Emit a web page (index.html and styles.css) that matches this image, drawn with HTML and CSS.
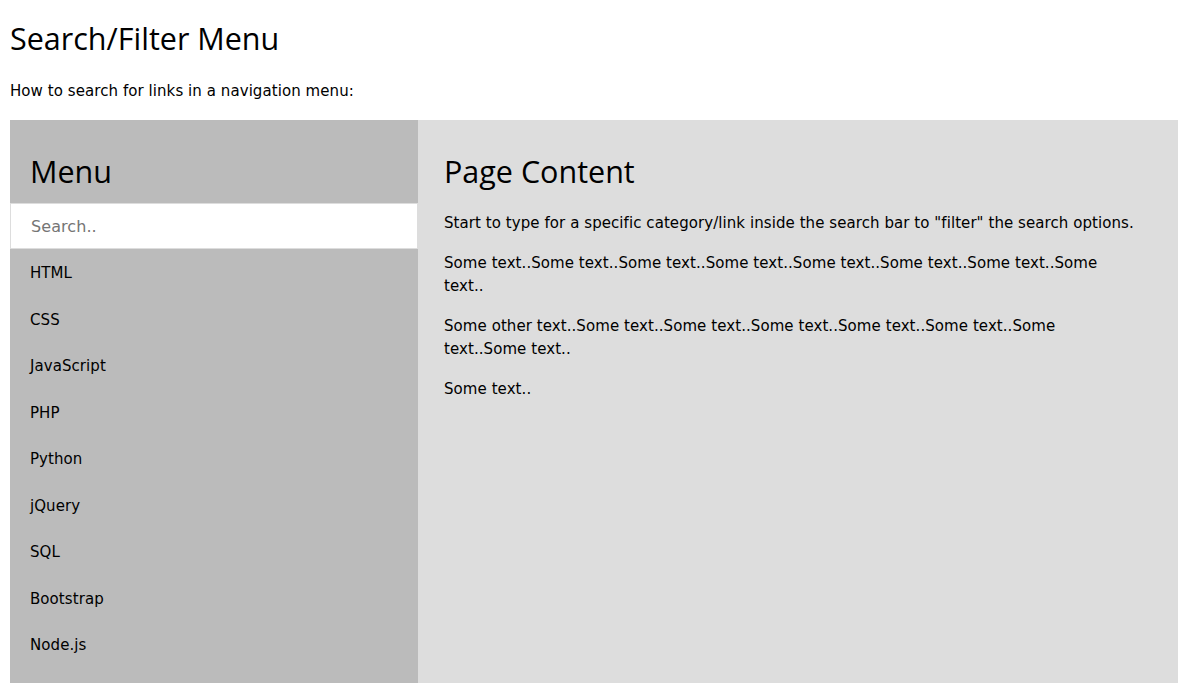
FILE: index.html
```html
<!DOCTYPE html>
<html>
<head>
<meta charset="utf-8">
<link rel="stylesheet" href="styles.css">
</head>
<body>
<h2 class="title">Search/Filter Menu</h2>
<p class="intro">How to search for links in a navigation menu:</p>
<div class="row">
  <div class="left">
    <h2 class="panel-title">Menu</h2>
    <input class="search" type="text" placeholder="Search..">
    <ul class="menu">
      <li><a href="#">HTML</a></li>
      <li><a href="#">CSS</a></li>
      <li><a href="#">JavaScript</a></li>
      <li><a href="#">PHP</a></li>
      <li><a href="#">Python</a></li>
      <li><a href="#">jQuery</a></li>
      <li><a href="#">SQL</a></li>
      <li><a href="#">Bootstrap</a></li>
      <li><a href="#">Node.js</a></li>
    </ul>
  </div>
  <div class="right">
    <h2 class="panel-title content-title">Page Content</h2>
    <p>Start to type for a specific category/link inside the search bar to "filter" the search options.</p>
    <p>Some text..Some text..Some text..Some text..Some text..Some text..Some text..Some text..</p>
    <p>Some other text..Some text..Some text..Some text..Some text..Some text..Some text..Some text..</p>
    <p>Some text..</p>
  </div>
</div>
</body>
</html>
```
FILE: styles.css
```css
* { box-sizing: border-box; }
body {
  margin: 0 8px 0 10px;
  font-family: "DejaVu Sans", Verdana, sans-serif;
  font-size: 15px;
  letter-spacing: 0.07px;
  color: #000;
  background: #fff;
}
.title {
  font-family: "Open Sans", "Segoe UI", sans-serif;
  font-weight: 400;
  font-size: 30.5px;
  letter-spacing: 0;
  line-height: 40px;
  margin: 18px 0 0;
}
.intro {
  margin: 22px 0 0;
  line-height: 23px;
}
.row {
  display: flex;
  margin-top: 17px;
}
.left {
  flex: 0 0 408px;
  background: #bbb;
  padding: 15px 0;
}
.right {
  flex: 1;
  background: #ddd;
  padding: 15px 39px 15px 26px;
}
.panel-title {
  font-family: "Open Sans", "Segoe UI", sans-serif;
  font-weight: 400;
  font-size: 30.5px;
  letter-spacing: 0;
  line-height: 40px;
  margin: 16px 0 12px;
  padding-left: 20px;
}
.content-title {
  padding-left: 0;
  margin-bottom: 21px;
}
.search {
  display: block;
  width: 100%;
  height: 46px;
  font-family: "DejaVu Sans", Verdana, sans-serif;
  font-size: 16px;
  letter-spacing: 0.07px;
  padding: 11px 20px;
  border: 1px solid #ddd;
  outline: none;
  background: #fff;
}
.search::placeholder { color: #757575; }
.menu {
  list-style: none;
  margin: 0;
  padding: 0;
}
.menu a {
  display: block;
  padding: 13px 20px 11px;
  line-height: 22.5px;
  color: #000;
  text-decoration: none;
}
.right p {
  margin: 17px 0 0;
  line-height: 23px;
}
.right p:first-of-type { margin-top: 0; }
```
